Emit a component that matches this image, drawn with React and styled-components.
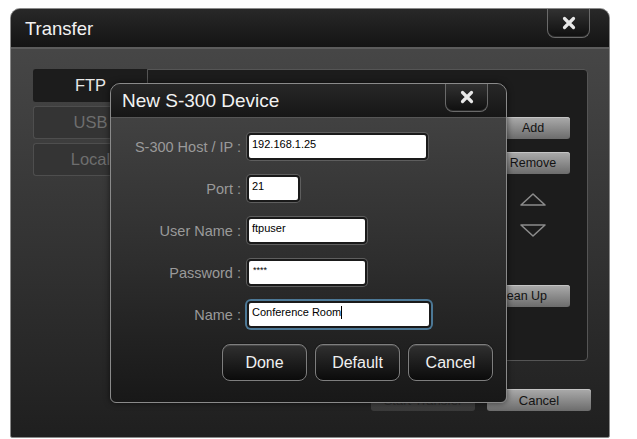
import React from "react";
import styled, { createGlobalStyle } from "styled-components";

const Global = createGlobalStyle`
  html, body { margin: 0; padding: 0; background: #ffffff; }
  body { font-family: "Liberation Sans", Arial, sans-serif; }
  * { box-sizing: border-box; }
`;

const Page = styled.div`
  padding: 8px 0 0 10px;
`;

const Window = styled.div`
  position: relative;
  width: 600px;
  height: 430px;
  border: 1px solid #8a8a8a;
  border-radius: 10px 10px 2px 2px;
  background: linear-gradient(#4a4a4a, #333333 55%, #1f1f1f);
  display: flex;
  flex-direction: column;
  overflow: hidden;
`;

const TitleBar = styled.div`
  height: 40px;
  flex: none;
  display: flex;
  justify-content: space-between;
  align-items: flex-start;
  padding: 0 19px 0 14px;
  background: linear-gradient(#282828, #141414);
  border-bottom: 2px solid #5c5c5c;
`;

const Title = styled.div`
  color: #f2f2f2;
  font-size: ${(p) => p.$size}px;
  line-height: ${(p) => p.$lh}px;
`;

const CloseTab = styled.div`
  width: 43px;
  height: ${(p) => p.$h}px;
  margin-top: -1px;
  border: 1px solid #6a6a6a;
  border-top: none;
  border-radius: 0 0 8px 8px;
  background: linear-gradient(#333333, #0f0f0f);
  box-shadow: inset 0 -1px 0 #2a2a2a;
  display: flex;
  align-items: center;
  justify-content: center;
`;

const Body = styled.div`
  flex: 1;
  padding: 20px 21px 25px 22px;
  display: flex;
  flex-direction: column;
`;

const Main = styled.div`
  height: 292px;
  display: flex;
`;

const Tabs = styled.div`
  width: 114px;
  display: flex;
  flex-direction: column;
  gap: 4px;
`;

const Tab = styled.div`
  height: 33px;
  display: flex;
  align-items: center;
  justify-content: center;
  font-size: 16.5px;
  border-radius: 3px 0 0 3px;
  border: 1px solid ${(p) => (p.$active ? "#1c1c1c" : "#4e4e4e")};
  border-right: none;
  background: ${(p) => (p.$active ? "#1c1c1c" : "#343434")};
  color: ${(p) => (p.$active ? "#e8e8e8" : "#6e6e6e")};
`;

const Panel = styled.div`
  flex: 1;
  background: #1c1c1c;
  border: 1px solid #555555;
  border-radius: 0 4px 4px 4px;
  display: flex;
  justify-content: flex-end;
`;

const Side = styled.div`
  width: 120px;
  padding: 47px 17px 0 0;
  display: flex;
  flex-direction: column;
  align-items: flex-end;
`;

const SideButton = styled.div`
  width: ${(p) => p.$w || 74}px;
  height: 22px;
  flex: none;
  margin-top: ${(p) => p.$mt || 0}px;
  border-radius: 3px;
  background: linear-gradient(#ababab, #6c6c6c);
  box-shadow: inset 0 1px 0 #c4c4c4;
  color: #121212;
  font-size: 12.5px;
  display: flex;
  align-items: center;
  justify-content: center;
`;

const Arrow = styled.svg`
  display: block;
  flex: none;
  margin-top: ${(p) => p.$mt}px;
  margin-right: 23px;
`;

const Footer = styled.div`
  margin-top: 28px;
  margin-right: -3px;
  display: flex;
  justify-content: flex-end;
  gap: 12px;
`;

const FooterButton = styled.div`
  width: 104px;
  height: 22px;
  border-radius: 3px;
  font-size: 13px;
  display: flex;
  align-items: center;
  justify-content: center;
  background: ${(p) =>
    p.$disabled ? "linear-gradient(#4a4a4a, #3a3a3a)" : "linear-gradient(#ababab, #6c6c6c)"};
  color: ${(p) => (p.$disabled ? "#2c2c2c" : "#141414")};
  box-shadow: ${(p) => (p.$disabled ? "none" : "inset 0 1px 0 #c4c4c4")};
`;

const Dialog = styled.div`
  position: absolute;
  left: 99px;
  top: 74px;
  width: 397px;
  height: 320px;
  border: 1px solid #8a8a8a;
  border-radius: 10px 10px 6px 6px;
  background: linear-gradient(#464646, #2e2e2e 55%, #181818);
  box-shadow: 0 0 6px rgba(0, 0, 0, 0.6);
  display: flex;
  flex-direction: column;
  overflow: hidden;
`;

const DialogTitleBar = styled.div`
  height: 34px;
  flex: none;
  display: flex;
  justify-content: space-between;
  align-items: flex-start;
  padding: 0 18px 0 11px;
  background: linear-gradient(#272727, #161616);
  border-bottom: 1px solid #565656;
`;

const Form = styled.div`
  display: grid;
  grid-template-columns: 130px auto;
  column-gap: 6px;
  row-gap: 15px;
  padding-top: 15px;
  align-items: center;
  justify-items: start;
`;

const Label = styled.div`
  justify-self: end;
  color: #9a9a9a;
  font-size: 14.5px;
  white-space: nowrap;
`;

const Field = styled.div`
  width: ${(p) => p.$w}px;
  height: 27px;
  background: #ffffff;
  border: 2px solid #1a1a1a;
  border-radius: 4px;
  box-shadow: ${(p) => (p.$focused ? "0 0 0 2px #4c7896" : "0 0 0 1px #5e5e5e")};
  color: #000000;
  font-size: ${(p) => (p.$small ? 9 : 11)}px;
  padding: ${(p) => (p.$small ? "3px 4px 0" : "3px 3px 0")};
  line-height: 13px;
  white-space: nowrap;
  overflow: hidden;
`;

const Caret = styled.span`
  display: inline-block;
  width: 1px;
  height: 13px;
  background: #000;
  vertical-align: top;
`;

const Actions = styled.div`
  display: flex;
  justify-content: flex-end;
  gap: 8px;
  margin-top: 16px;
  padding-right: 13px;
`;

const DialogButton = styled.div`
  width: 85px;
  height: 37px;
  border-radius: 8px;
  border: 1px solid #7e7e7e;
  background: linear-gradient(#303030, #0b0b0b);
  box-shadow: inset 0 1px 0 rgba(255, 255, 255, 0.12), 0 0 0 1px #1a1a1a;
  color: #f0f0f0;
  font-size: 16px;
  display: flex;
  align-items: center;
  justify-content: center;
`;

const XIcon = () => (
  <svg width="14" height="14" viewBox="0 0 14 14">
    <path d="M2.5 2.5 L11.5 11.5 M11.5 2.5 L2.5 11.5" stroke="#e8e8e8" strokeWidth="3.2" strokeLinecap="round" />
  </svg>
);

export default function App() {
  return (
    <>
      <Global />
      <Page>
        <Window>
          <TitleBar>
            <Title $size={18.5} $lh={40}>Transfer</Title>
            <CloseTab $h={30}>
              <XIcon />
            </CloseTab>
          </TitleBar>
          <Body>
            <Main>
              <Tabs>
                <Tab $active>FTP</Tab>
                <Tab>USB</Tab>
                <Tab>Local</Tab>
              </Tabs>
              <Panel>
                <Side>
                  <SideButton>Add</SideButton>
                  <SideButton $mt={13}>Remove</SideButton>
                  <Arrow $mt={18} width="28" height="14" viewBox="0 0 28 14">
                    <path d="M2 13 L14 2 L26 13 Z" fill="none" stroke="#8a8a8a" strokeWidth="1.6" strokeLinejoin="round" />
                  </Arrow>
                  <Arrow $mt={18} width="28" height="14" viewBox="0 0 28 14">
                    <path d="M2 1 L14 12 L26 1 Z" fill="none" stroke="#8a8a8a" strokeWidth="1.6" strokeLinejoin="round" />
                  </Arrow>
                  <SideButton $mt={47} $w={98}>Clean Up</SideButton>
                </Side>
              </Panel>
            </Main>
            <Footer>
              <FooterButton $disabled>Start Transfer</FooterButton>
              <FooterButton>Cancel</FooterButton>
            </Footer>
          </Body>

          <Dialog>
            <DialogTitleBar>
              <Title $size={19} $lh={34}>New S-300 Device</Title>
              <CloseTab $h={29}>
                <XIcon />
              </CloseTab>
            </DialogTitleBar>
            <Form>
              <Label>S-300 Host / IP :</Label>
              <Field $w={181}>192.168.1.25</Field>
              <Label>Port :</Label>
              <Field $w={53}>21</Field>
              <Label>User Name :</Label>
              <Field $w={120}>ftpuser</Field>
              <Label>Password :</Label>
              <Field $w={120} $small>****</Field>
              <Label>Name :</Label>
              <Field $w={184} $focused>
                Conference Room<Caret />
              </Field>
            </Form>
            <Actions>
              <DialogButton>Done</DialogButton>
              <DialogButton>Default</DialogButton>
              <DialogButton>Cancel</DialogButton>
            </Actions>
          </Dialog>
        </Window>
      </Page>
    </>
  );
}
